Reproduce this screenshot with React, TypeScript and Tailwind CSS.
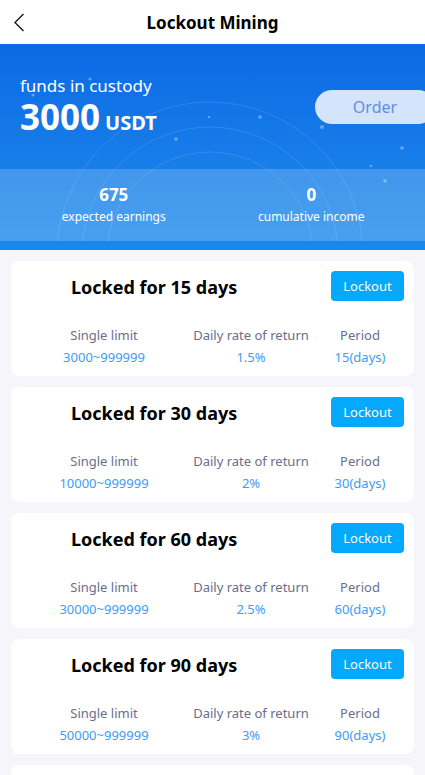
import React from "react";

const plans = [
  { days: 15, limit: "3000~999999", rate: "1.5%" },
  { days: 30, limit: "10000~999999", rate: "2%" },
  { days: 60, limit: "30000~999999", rate: "2.5%" },
  { days: 90, limit: "50000~999999", rate: "3%" },
  { days: 120, limit: "100000~999999", rate: "3.5%" },
];

const dots: [number, number, number][] = [
  [33, 51, 1.6],
  [90, 35, 1.6],
  [209, 73, 1.2],
  [260, 73, 1.8],
  [322, 83, 2],
  [176, 95, 1.8],
  [402, 104, 1.8],
  [371, 122, 1.2],
  [385, 137, 1.8],
];

function Card({ days, limit, rate }: { days: number; limit: string; rate: string }) {
  return (
    <div className="bg-white rounded-[8px] pt-[10px] pb-[10px]">
      <div className="flex items-center justify-between h-[30px] pl-[60px] pr-[10px]">
        <div className="text-[18px] font-bold text-black leading-[30px] mt-[2px]">Locked for {days} days</div>
        <button className="w-[73px] h-[30px] rounded-[4px] bg-[#04a8fc] text-white text-[13px] leading-[30px]">
          Lockout
        </button>
      </div>
      <div className="grid grid-cols-[126px_168px_50px] pl-[30px] mt-[25px] text-[13px] leading-[18px] text-center">
        <div className="text-[#6a6e8c] whitespace-nowrap">Single limit</div>
        <div className="text-[#6a6e8c] whitespace-nowrap">Daily rate of return</div>
        <div className="text-[#6a6e8c] whitespace-nowrap">Period</div>
        <div className="text-[#3d9cf6] mt-[4px] whitespace-nowrap">{limit}</div>
        <div className="text-[#3d9cf6] mt-[4px] whitespace-nowrap">{rate}</div>
        <div className="text-[#3d9cf6] mt-[4px] whitespace-nowrap flex justify-center">
          <span>{days}(days)</span>
        </div>
      </div>
    </div>
  );
}

export default function App() {
  return (
    <div className="w-[425px] h-[775px] overflow-hidden bg-[#f5f5fa]" style={{ fontFamily: '"Noto Sans", "Open Sans", sans-serif' }}>
      {/* Header */}
      <div className="relative h-[44px] bg-white flex items-center justify-center">
        <svg className="absolute left-[13px] top-[13px]" width="12" height="19" viewBox="0 0 12 19" fill="none">
          <path d="M10.5 1 L2 9.5 L10.5 18" stroke="#1a1a1a" strokeWidth="1.4" />
        </svg>
        <div className="text-[17px] font-bold text-black leading-none">Lockout Mining</div>
      </div>

      {/* Banner */}
      <div className="relative overflow-hidden bg-[#1a87ea] pb-[9px]">
        <div className="h-[125px] bg-gradient-to-b from-[#0d69e5] to-[#187fe9] flex justify-between pl-[20px]">
          <div className="relative z-10 pt-[30px] text-white">
            <div className="text-[17px] leading-[24px]">funds in custody</div>
            <div className="flex items-baseline mt-[-2px]">
              <span className="text-[35px] font-bold leading-[42px]">3000</span>
              <span className="text-[20px] font-bold ml-[5px]">USDT</span>
            </div>
          </div>
          <div className="relative z-10 pt-[46px]">
            <div className="w-[120px] h-[34px] mr-[-10px] rounded-full bg-[#d3e4fb] text-[#5f8ee9] text-[16px] flex items-center justify-center">
              Order
            </div>
          </div>
        </div>
        <div className="h-[72px] bg-gradient-to-b from-[#4296ec] to-[#47a0ef] grid grid-cols-2 px-[15px] text-white text-center">
          <div className="relative z-10 flex flex-col items-center pt-[15px]">
            <div className="text-[17px] font-bold leading-[22px]">675</div>
            <div className="text-[12px] leading-[18px] mt-[2px]">expected earnings</div>
          </div>
          <div className="relative z-10 flex flex-col items-center pt-[15px]">
            <div className="text-[17px] font-bold leading-[22px]">0</div>
            <div className="text-[12px] leading-[18px] mt-[2px]">cumulative income</div>
          </div>
        </div>
        <svg className="absolute left-0 top-0 pointer-events-none" width="425" height="197" viewBox="0 0 425 197">
          <g fill="none" stroke="#ffffff" strokeWidth="1">
            <g strokeOpacity="0.12">
              <circle cx="210" cy="211" r="153" />
              <circle cx="210" cy="211" r="128" />
              <circle cx="210" cy="211" r="103" />
            </g>
          </g>
          {dots.map(([x, y, r], i) => (
            <circle key={i} cx={x} cy={y} r={r} fill="#ffffff" fillOpacity="0.35" />
          ))}
        </svg>
      </div>

      {/* Cards */}
      <div className="flex flex-col gap-[11px] px-[11px] pt-[11px]">
        {plans.map((p) => (
          <Card key={p.days} {...p} />
        ))}
      </div>
    </div>
  );
}
